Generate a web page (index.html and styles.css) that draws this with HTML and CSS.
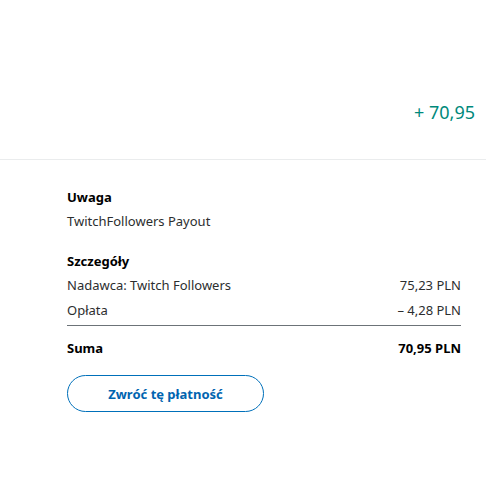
FILE: index.html
```
<!DOCTYPE html>
<html>
<head>
<meta charset="utf-8">
<link rel="stylesheet" href="styles.css">
</head>
<body>
<div class="top">
  <div class="amount">+ 70,95</div>
</div>
<div class="details">
  <div class="section">
    <div class="heading">Uwaga</div>
    <div class="row"><span>TwitchFollowers Payout</span></div>
  </div>
  <div class="section summary">
    <div class="heading">Szczegóły</div>
    <div class="row"><span>Nadawca: Twitch Followers</span><span>75,23 PLN</span></div>
    <div class="row last"><span>Opłata</span><span>– 4,28 PLN</span></div>
    <div class="row total"><span>Suma</span><span>70,95 PLN</span></div>
  </div>
  <button class="btn">Zwróć tę płatność</button>
</div>
</body>
</html>
```
FILE: styles.css
```
html, body { margin: 0; padding: 0; background: #fff; }
body { font-family: "Noto Sans", "Open Sans", sans-serif; color: #2c2e2f; font-size: 13px; }
.top { height: 160px; border-bottom: 1px solid #eaeced; display: flex; justify-content: flex-end; box-sizing: border-box; }
.amount { margin-top: 100px; margin-right: 11px; font-size: 18px; color: #00897b; line-height: 24px; height: 24px; }
.details { padding: 28px 25px 0 67px; }
.section { margin-bottom: 19px; }
.section.summary { margin-bottom: 15px; }
.heading { font-weight: bold; color: #000; line-height: 18px; margin-bottom: 3px; }
.row { display: flex; justify-content: space-between; line-height: 18px; padding: 3px 0; margin-bottom: 1px; }
.row.last { border-bottom: 1px solid #6c7378; padding-bottom: 6px; }
.row.total { font-weight: bold; color: #000; margin-top: 10px; }
.btn { display: block; width: 197px; height: 37px; border: 1px solid #0070ba; border-radius: 19px; background: #fff; color: #0064b0; font-family: inherit; font-size: 13px; font-weight: bold; margin: 0; }
```
